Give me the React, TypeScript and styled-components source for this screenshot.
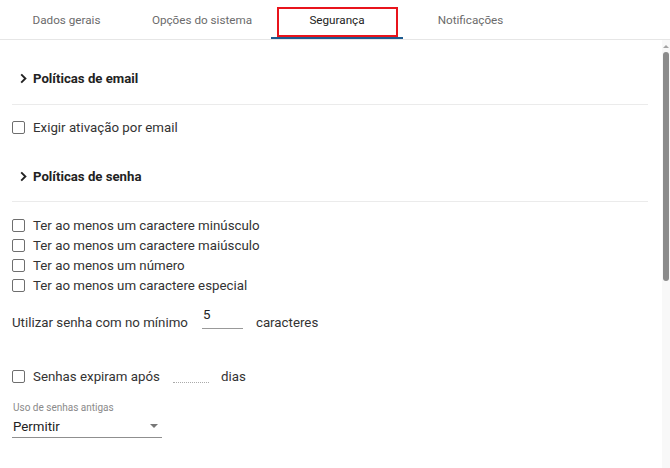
import React from "react";
import styled, { createGlobalStyle } from "styled-components";

const Global = createGlobalStyle`
  html, body { margin: 0; padding: 0; background: #fff; }
  body { font-family: Roboto, "Liberation Sans", Arial, sans-serif; color: #333; }
  * { box-sizing: border-box; }
`;

const Page = styled.div`
  width: 670px;
  height: 468px;
  display: flex;
  flex-direction: column;
  overflow: hidden;
`;

const TabBar = styled.div`
  height: 40px;
  display: flex;
  border-bottom: 1px solid #e6e6e6;
  flex: 0 0 auto;
`;

const Tab = styled.div<{ $w: number; $active?: boolean }>`
  position: relative;
  width: ${(p) => p.$w}px;
  height: 39px;
  display: flex;
  align-items: center;
  justify-content: center;
  padding-top: 2px;
  font-size: 11.7px;
  color: ${(p) => (p.$active ? "#222" : "#6b6b6b")};
  border-bottom: 2px solid ${(p) => (p.$active ? "#1d5b8f" : "transparent")};
`;

const Highlight = styled.div`
  position: absolute;
  left: 6px;
  right: 5px;
  top: 7px;
  bottom: 0px;
  border: 2px solid #e8141c;
  pointer-events: none;
`;

const Body = styled.div`
  flex: 1;
  display: flex;
  min-height: 0;
`;

const Content = styled.div`
  flex: 1;
  padding: 0 14px 0 12px;
`;

const SectionHeader = styled.div<{ $top: number }>`
  margin-top: ${(p) => p.$top}px;
  height: 36px;
  display: flex;
  align-items: center;
  gap: 6px;
  padding-left: 8px;
  font-size: 13.2px;
  font-weight: 700;
  color: #222;
`;

const Divider = styled.div<{ $top: number }>`
  margin-top: ${(p) => p.$top}px;
  height: 1px;
  background: #ebebeb;
`;

const CheckRow = styled.label<{ $top?: number }>`
  margin-top: ${(p) => p.$top ?? 0}px;
  height: 20px;
  display: flex;
  align-items: center;
  gap: 8px;
  font-size: 13.3px;
  color: #333;
`;

const Box = styled.span`
  width: 13px;
  height: 13px;
  border: 1.5px solid #6e6e6e;
  border-radius: 2px;
  flex: 0 0 auto;
`;

const InlineRow = styled.div<{ $top: number }>`
  margin-top: ${(p) => p.$top}px;
  height: 30px;
  display: flex;
  align-items: center;
  font-size: 13.3px;
  color: #333;
`;

const NumberField = styled.div<{ $w: number; $ml: number; $mr: number; $dotted?: boolean }>`
  width: ${(p) => p.$w}px;
  margin-left: ${(p) => p.$ml}px;
  margin-right: ${(p) => p.$mr}px;
  height: 22px;
  align-self: flex-start;
  padding-left: 1px;
  font-size: 13.3px;
  line-height: 16px;
  color: #222;
  border-bottom: 1px ${(p) => (p.$dotted ? "dotted #aaa" : "solid #999")};
`;

const ExpireLabel = styled.span`
  display: flex;
  align-items: center;
  gap: 8px;
`;

const SelectLabel = styled.div`
  margin-top: 11px;
  height: 12px;
  padding-left: 1px;
  font-size: 10px;
  line-height: 12px;
  color: #8a8a8a;
`;

const Select = styled.div`
  width: 150px;
  height: 24px;
  display: flex;
  align-items: center;
  justify-content: space-between;
  padding: 1px 4px 0 1px;
  font-size: 13.3px;
  color: #222;
  border-bottom: 1px solid #8f8f8f;
`;

const Scrollbar = styled.div`
  width: 8px;
  background: #f8f8f8;
  display: flex;
  flex-direction: column;
  align-items: center;
  padding-top: 5px;
`;

const Thumb = styled.div`
  margin-top: 4px;
  width: 6px;
  height: 229px;
  border-radius: 3px;
  background: #8b8b8b;
`;

const Chevron = () => (
  <svg width="7" height="11" viewBox="0 0 7 11">
    <path d="M1.2 1.3 L5.4 5.5 L1.2 9.7" fill="none" stroke="#222" strokeWidth="1.9" />
  </svg>
);

const Arrow = ({ color, w, h, up }: { color: string; w: number; h: number; up?: boolean }) => (
  <svg width={w} height={h} viewBox={`0 0 ${w} ${h}`}>
    <path d={up ? `M0 ${h} L${w / 2} 0 L${w} ${h} Z` : `M0 0 L${w} 0 L${w / 2} ${h} Z`} fill={color} />
  </svg>
);

const tabs = [
  { label: "Dados gerais", w: 133 },
  { label: "Opções do sistema", w: 138 },
  { label: "Segurança", w: 132, active: true },
  { label: "Notificações", w: 135 },
];

const rules = [
  "Ter ao menos um caractere minúsculo",
  "Ter ao menos um caractere maiúsculo",
  "Ter ao menos um número",
  "Ter ao menos um caractere especial",
];

export default function App() {
  return (
    <Page>
      <Global />
      <TabBar>
        {tabs.map((t) => (
          <Tab key={t.label} $w={t.w} $active={t.active}>
            {t.label}
            {t.active && <Highlight />}
          </Tab>
        ))}
      </TabBar>
      <Body>
        <Content>
          <SectionHeader $top={20}>
            <Chevron />
            Políticas de email
          </SectionHeader>
          <Divider $top={8} />
          <CheckRow $top={12}>
            <Box />
            Exigir ativação por email
          </CheckRow>
          <SectionHeader $top={21}>
            <Chevron />
            Políticas de senha
          </SectionHeader>
          <Divider $top={7} />
          {rules.map((r, i) => (
            <CheckRow key={r} $top={i === 0 ? 13 : 0}>
              <Box />
              {r}
            </CheckRow>
          ))}
          <InlineRow $top={12}>
            Utilizar senha com no mínimo
            <NumberField $w={41} $ml={14} $mr={13}>5</NumberField>
            caracteres
          </InlineRow>
          <InlineRow $top={24}>
            <ExpireLabel>
              <Box />
              Senhas expiram após
            </ExpireLabel>
            <NumberField $w={36} $ml={13} $mr={12} $dotted />
            dias
          </InlineRow>
          <SelectLabel>Uso de senhas antigas</SelectLabel>
          <Select>
            Permitir
            <Arrow color="#777" w={8} h={4} />
          </Select>
        </Content>
        <Scrollbar>
          <Arrow color="#a3a3a3" w={6} h={3} up />
          <Thumb />
        </Scrollbar>
      </Body>
    </Page>
  );
}
